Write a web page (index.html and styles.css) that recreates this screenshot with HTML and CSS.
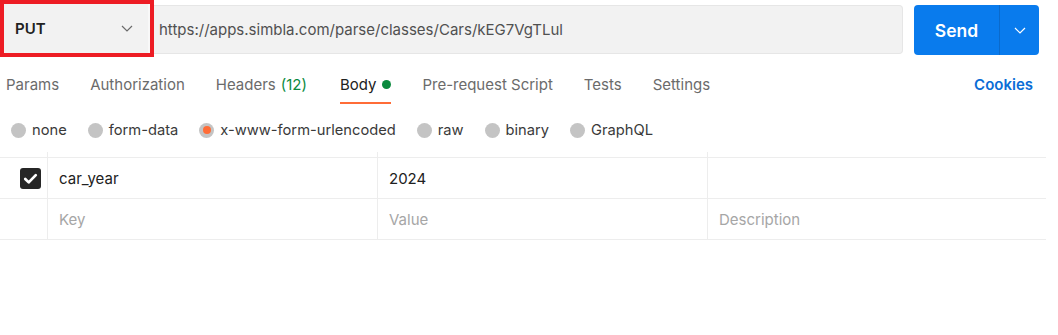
FILE: index.html
```html
<!DOCTYPE html>
<html lang="en">
<head>
<meta name="viewport" content="width=device-width, initial-scale=1">
<title>PUT request</title>
<link rel="stylesheet" href="styles.css">
</head>
<body>

<div class="request-bar">
  <div class="method-mark">
    <div class="method">
      <span>PUT</span>
      <svg class="chevron" viewBox="0 0 12 7"><path d="M1 1l5 5 5-5"/></svg>
    </div>
  </div>
  <div class="url">https://apps.simbla.com/parse/classes/Cars/kEG7VgTLul</div>
  <div class="send">
    <span class="send-label">Send</span>
    <span class="send-more">
      <svg class="chevron light" viewBox="0 0 12 7"><path d="M1 1l5 5 5-5"/></svg>
    </span>
  </div>
</div>

<div class="tabs">
  <span class="tab">Params</span>
  <span class="tab">Authorization</span>
  <span class="tab">Headers <span class="count">(12)</span></span>
  <span class="tab active">Body <span class="dot"></span></span>
  <span class="tab">Pre-request Script</span>
  <span class="tab">Tests</span>
  <span class="tab">Settings</span>
  <span class="cookies">Cookies</span>
</div>

<div class="body-types">
  <label class="radio"><span class="circle"></span>none</label>
  <label class="radio"><span class="circle"></span>form-data</label>
  <label class="radio"><span class="circle on"></span>x-www-form-urlencoded</label>
  <label class="radio"><span class="circle"></span>raw</label>
  <label class="radio"><span class="circle"></span>binary</label>
  <label class="radio"><span class="circle"></span>GraphQL</label>
</div>

<div class="kv-table">
  <div class="kv-row head">
    <div class="cell check"></div><div class="cell"></div><div class="cell"></div><div class="cell"></div>
  </div>
  <div class="kv-row">
    <div class="cell check">
      <span class="checkbox">
        <svg viewBox="0 0 20 20"><path d="M5 10.5l3.3 3.2L15 6.8"/></svg>
      </span>
    </div>
    <div class="cell">car_year</div>
    <div class="cell">2024</div>
    <div class="cell"></div>
  </div>
  <div class="kv-row">
    <div class="cell check"></div>
    <div class="cell placeholder">Key</div>
    <div class="cell placeholder">Value</div>
    <div class="cell placeholder">Description</div>
  </div>
</div>

</body>
</html>
```

FILE: styles.css
```css
body {
  margin: 0;
  background-color: white;
  color: #212121;
  font-family: Inter, "Noto Sans", sans-serif;
  font-size: 15px;
}

/* top request bar */
.request-bar {
  display: flex;
  align-items: flex-start;
  height: 57px;
  padding-right: 19px;
}
.method-mark {
  border: 4px solid #ed1c24;
  box-sizing: border-box;
  width: 154px;
  height: 57px;
}
.method {
  height: 100%;
  background-color: #f2f2f2;
  border-right: 2px solid #f8f8f8;
  display: flex;
  align-items: center;
  justify-content: space-between;
  padding: 0 15px 0 11px;
  font-weight: 600;
  font-size: 15px;
}
.chevron {
  width: 12px;
  height: 7px;
  fill: none;
  stroke: #6b6b6b;
  stroke-width: 1.2;
}
.chevron.light {
  stroke: white;
}
.url {
  flex: 1;
  margin-top: 5px;
  height: 49px;
  box-sizing: border-box;
  background-color: #f2f2f2;
  border: 1px solid #e6e6e6;
  border-left: none;
  border-radius: 0 4px 4px 0;
  padding-left: 5px;
  display: flex;
  align-items: center;
  color: #505050;
}
.send {
  margin: 5px 0 0 11px;
  width: 125px;
  height: 50px;
  background-color: #097bed;
  border-radius: 4px;
  display: flex;
  color: white;
}
.send-label {
  width: 85px;
  display: flex;
  align-items: center;
  justify-content: center;
  font-weight: 600;
  font-size: 17.5px;
}
.send-more {
  flex: 1;
  border-left: 1px solid #0a6acc;
  display: flex;
  align-items: center;
  justify-content: center;
}

/* tabs */
.tabs {
  display: flex;
  align-items: stretch;
  height: 48px;
  padding: 0 25px 0 6px;
  gap: 31px;
}
.tab {
  display: flex;
  align-items: center;
  gap: 5px;
  color: #6b6b6b;
  padding-top: 9px;
  border-bottom: 2px solid transparent;
  margin-bottom: 1px;
}
.tab .count {
  color: #0b8a3e;
}
.tab.active {
  color: #212121;
  border-bottom-color: #ff6c37;
  margin-left: 2px;
}
.dot {
  width: 9px;
  height: 9px;
  border-radius: 50%;
  background-color: #0b8a3e;
  margin-left: 1px;
}
.cookies {
  margin-left: auto;
  display: flex;
  align-items: center;
  padding-top: 7px;
  color: #0b6dd6;
  font-weight: 600;
}

/* body type radios */
.body-types {
  display: flex;
  align-items: center;
  box-sizing: border-box;
  height: 47px;
  padding: 3px 0 0 11px;
  gap: 21px;
  font-size: 14.7px;
}
.radio {
  display: flex;
  align-items: center;
  gap: 6px;
  color: #3a3a3a;
}
.circle {
  width: 15px;
  height: 15px;
  border-radius: 50%;
  background-color: #c4c4c4;
  display: flex;
  align-items: center;
  justify-content: center;
}
.circle.on::after {
  content: "";
  width: 8px;
  height: 8px;
  border-radius: 50%;
  background-color: #ff6c37;
}

/* key/value table */
.kv-table {
  width: 1046px;
}
.kv-row {
  display: grid;
  grid-template-columns: 47px 330px 330px 1fr;
  height: 40px;
  border-bottom: 1px solid #ededed;
}
.kv-row.head {
  height: 5px;
}
.cell {
  display: flex;
  align-items: center;
  padding-left: 11px;
  border-left: 1px solid #ededed;
}
.cell.check {
  border-left: none;
  padding-left: 20px;
}
.placeholder {
  color: #a6a6a6;
}
.checkbox {
  width: 21px;
  height: 21px;
  border-radius: 3px;
  background-color: #262626;
  display: flex;
}
.checkbox svg {
  width: 21px;
  height: 21px;
  fill: none;
  stroke: white;
  stroke-width: 2.6;
  stroke-linecap: round;
  stroke-linejoin: round;
}
```
